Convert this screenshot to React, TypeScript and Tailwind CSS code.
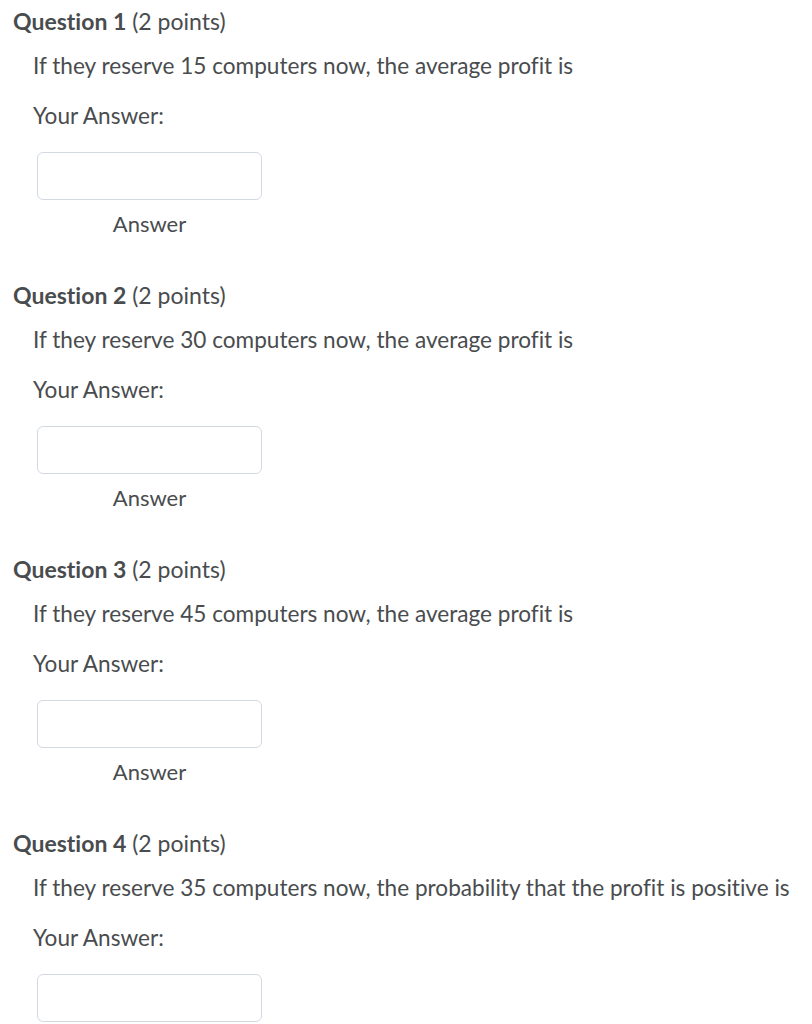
const QUESTIONS = [
  { n: 1, text: 'If they reserve 15 computers now, the average profit is' },
  { n: 2, text: 'If they reserve 30 computers now, the average profit is' },
  { n: 3, text: 'If they reserve 45 computers now, the average profit is' },
  { n: 4, text: 'If they reserve 35 computers now, the probability that the profit is positive is' },
]

function Question({ n, text }: { n: number; text: string }) {
  return (
    <div className="flex flex-col pb-[41px]">
      <h2 className="pl-[13px] text-[23px] leading-[30px]">
        <span className="font-bold">Question {n}</span> (2 points)
      </h2>
      <div className="pl-[33px] flex flex-col">
        <p className="mt-[15px] text-[22.6px] leading-[30px]">{text}</p>
        <p className="mt-[20px] text-[22.6px] leading-[30px]">Your Answer:</p>
        <div className="mt-[21px] ml-[4px] w-[225px] flex flex-col">
          <input
            type="text"
            className="h-[48px] w-full rounded-[6px] border border-[#d3d9e3] bg-white outline-none"
          />
          <span className="mt-[9px] text-center text-[22px] leading-[30px]">Answer</span>
        </div>
      </div>
    </div>
  )
}

export default function App() {
  return (
    <div className="h-[1024px] overflow-hidden bg-white pt-[6px] text-[#494c4e] font-['Lato',sans-serif] [font-variant-ligatures:none]">
      {QUESTIONS.map(q => (
        <Question key={q.n} n={q.n} text={q.text} />
      ))}
    </div>
  )
}
